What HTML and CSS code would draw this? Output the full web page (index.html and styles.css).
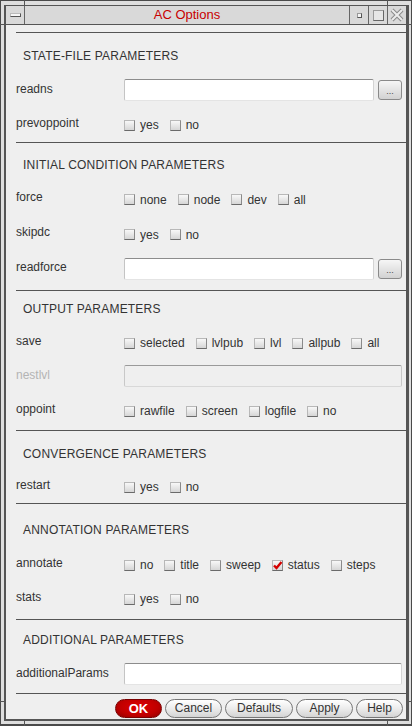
FILE: index.html
```html
<!DOCTYPE html>
<html lang="en">
<head>
<meta charset="utf-8">
<title>AC Options</title>
<link rel="stylesheet" href="styles.css">
</head>
<body>
<div class="window">
  <span class="mark mark-v mark-tl"></span>
  <span class="mark mark-v mark-tr"></span>
  <span class="mark mark-v mark-bl"></span>
  <span class="mark mark-v mark-br"></span>
  <span class="mark mark-h mark-lt"></span>
  <span class="mark mark-h mark-lb"></span>
  <span class="mark mark-h mark-rt"></span>
  <span class="mark mark-h mark-rb"></span>
  <div class="frame">
    <div class="titlebar">
      <div class="tb-btn"><span class="menu-bar"></span></div>
      <div class="tb-title">AC Options</div>
      <div class="tb-btn"><span class="mini-sq"></span></div>
      <div class="tb-btn"><span class="max-sq"></span></div>
      <div class="tb-btn tb-last">
        <svg class="close-x" width="14" height="14" viewBox="0 0 14 14">
          <path d="M2 2 L12 12 M12 2 L2 12" stroke="#8a8a8a" stroke-width="4" fill="none"/>
          <path d="M2 2 L12 12 M12 2 L2 12" stroke="#ececec" stroke-width="2" fill="none"/>
        </svg>
      </div>
    </div>

    <div class="content">
      <div class="sep"></div>
      <div class="section sec-state">
        <div class="head">STATE-FILE PARAMETERS</div>
        <div class="row">
          <div class="label">readns</div>
          <div class="ctrl"><input class="field" type="text"><span class="browse">...</span></div>
        </div>
        <div class="row">
          <div class="label">prevoppoint</div>
          <div class="ctrl opts">
            <span class="opt"><span class="cb"></span>yes</span>
            <span class="opt"><span class="cb"></span>no</span>
          </div>
        </div>
      </div>

      <div class="sep"></div>
      <div class="section sec-init">
        <div class="head">INITIAL CONDITION PARAMETERS</div>
        <div class="row">
          <div class="label">force</div>
          <div class="ctrl opts">
            <span class="opt"><span class="cb"></span>none</span>
            <span class="opt"><span class="cb"></span>node</span>
            <span class="opt"><span class="cb"></span>dev</span>
            <span class="opt"><span class="cb"></span>all</span>
          </div>
        </div>
        <div class="row">
          <div class="label">skipdc</div>
          <div class="ctrl opts">
            <span class="opt"><span class="cb"></span>yes</span>
            <span class="opt"><span class="cb"></span>no</span>
          </div>
        </div>
        <div class="row">
          <div class="label">readforce</div>
          <div class="ctrl"><input class="field" type="text"><span class="browse">...</span></div>
        </div>
      </div>

      <div class="sep"></div>
      <div class="section sec-output">
        <div class="head">OUTPUT PARAMETERS</div>
        <div class="row">
          <div class="label">save</div>
          <div class="ctrl opts">
            <span class="opt"><span class="cb"></span>selected</span>
            <span class="opt"><span class="cb"></span>lvlpub</span>
            <span class="opt"><span class="cb"></span>lvl</span>
            <span class="opt"><span class="cb"></span>allpub</span>
            <span class="opt"><span class="cb"></span>all</span>
          </div>
        </div>
        <div class="row">
          <div class="label label-disabled">nestlvl</div>
          <div class="ctrl"><input class="field field-disabled" type="text" disabled></div>
        </div>
        <div class="row">
          <div class="label">oppoint</div>
          <div class="ctrl opts">
            <span class="opt"><span class="cb"></span>rawfile</span>
            <span class="opt"><span class="cb"></span>screen</span>
            <span class="opt"><span class="cb"></span>logfile</span>
            <span class="opt"><span class="cb"></span>no</span>
          </div>
        </div>
      </div>

      <div class="sep"></div>
      <div class="section sec-conv">
        <div class="head">CONVERGENCE PARAMETERS</div>
        <div class="row">
          <div class="label">restart</div>
          <div class="ctrl opts">
            <span class="opt"><span class="cb"></span>yes</span>
            <span class="opt"><span class="cb"></span>no</span>
          </div>
        </div>
      </div>

      <div class="sep"></div>
      <div class="section sec-annot">
        <div class="head">ANNOTATION PARAMETERS</div>
        <div class="row">
          <div class="label">annotate</div>
          <div class="ctrl opts">
            <span class="opt"><span class="cb"></span>no</span>
            <span class="opt"><span class="cb"></span>title</span>
            <span class="opt"><span class="cb"></span>sweep</span>
            <span class="opt"><span class="cb cb-checked"><svg width="11" height="11" viewBox="0 0 11 11"><path d="M2 5.5 L4.5 8 L9.5 2" stroke="#d40000" stroke-width="2.4" fill="none"/></svg></span>status</span>
            <span class="opt"><span class="cb"></span>steps</span>
          </div>
        </div>
        <div class="row">
          <div class="label">stats</div>
          <div class="ctrl opts">
            <span class="opt"><span class="cb"></span>yes</span>
            <span class="opt"><span class="cb"></span>no</span>
          </div>
        </div>
      </div>

      <div class="sep"></div>
      <div class="section sec-add">
        <div class="head">ADDITIONAL PARAMETERS</div>
        <div class="row">
          <div class="label">additionalParams</div>
          <div class="ctrl"><input class="field" type="text"></div>
        </div>
      </div>

      <div class="sep"></div>
      <div class="buttons">
        <span class="btn btn-ok">OK</span>
        <span class="btn btn-cancel">Cancel</span>
        <span class="btn btn-defaults">Defaults</span>
        <span class="btn btn-apply">Apply</span>
        <span class="btn btn-help">Help</span>
      </div>
    </div>
  </div>
</div>
</body>
</html>
```

FILE: styles.css
```css
html, body {
  margin: 0;
  padding: 0;
  background: #dedede;
}

body {
  font-family: "Liberation Sans", Arial, sans-serif;
  font-size: 12px;
  color: #333;
}

.window {
  position: relative;
  width: 412px;
  height: 726px;
  box-sizing: border-box;
  border: 1px solid #4a4a4a;
  border-bottom-width: 2px;
  background: #dedede;
  padding: 4px 2px 3px 3px;
}

.mark {
  position: absolute;
  background: #555;
}
.mark-v { width: 1px; }
.mark-h { height: 1px; }
.mark-tl { left: 23px; top: -1px; height: 6px; }
.mark-tr { left: 386px; top: -1px; height: 6px; }
.mark-bl { left: 23px; top: 718px; bottom: -2px; }
.mark-br { left: 386px; top: 718px; bottom: -2px; }
.mark-lt { left: -1px; width: 6px; top: 23px; }
.mark-lb { left: -1px; width: 6px; top: 700px; }
.mark-rt { right: -1px; width: 6px; top: 23px; }
.mark-rb { right: -1px; width: 6px; top: 700px; }

.frame {
  height: 100%;
  box-sizing: border-box;
  border-style: solid;
  border-color: #555;
  border-width: 1px 3px 2px 2px;
  background: #efefef;
  display: flex;
  flex-direction: column;
}

/* title bar */
.titlebar {
  height: 19px;
  flex: none;
  box-sizing: border-box;
  border-bottom: 1px solid #555;
  background: #d9d9d9;
  display: flex;
}
.tb-btn {
  width: 18px;
  flex: none;
  border-right: 1px solid #666;
  display: flex;
  align-items: center;
  justify-content: center;
}
.tb-last { border-right: none; }
.tb-title {
  flex: 1;
  border-right: 1px solid #666;
  text-align: center;
  color: #c80000;
  font-size: 13px;
  line-height: 18px;
}
.menu-bar {
  width: 10px;
  height: 3px;
  background: #f6f6f6;
  border-right: 1px solid #555;
  border-bottom: 1px solid #555;
  border-top: 1px solid #bbb;
  border-left: 1px solid #bbb;
  box-sizing: border-box;
  width: 11px;
  height: 4px;
}
.mini-sq {
  width: 5px;
  height: 5px;
  box-sizing: border-box;
  background: #f4f4f4;
  border-top: 1px solid #999;
  border-left: 1px solid #999;
  border-right: 1px solid #555;
  border-bottom: 1px solid #555;
}
.max-sq {
  width: 11px;
  height: 11px;
  box-sizing: border-box;
  background: #e6e6e6;
  border-top: 1px solid #9a9a9a;
  border-left: 1px solid #9a9a9a;
  border-right: 1px solid #666;
  border-bottom: 1px solid #666;
}
.close-x { display: block; }

/* content */
.content {
  flex: 1;
  display: flex;
  flex-direction: column;
  padding-top: 7px;
}

.sep {
  height: 1px;
  flex: none;
  background: #555;
  margin-left: 10px;
}

.section {
  padding: var(--pt) 4px var(--pb) 10px;
}
.sec-state  { --pt: 6px; --pb: 1px; --hh: 34px; --rh: 34px; }
.sec-init   { --pt: 6px; --pb: 4px; --hh: 32px; --rh: 35px; }
.sec-output { --pt: 2px; --pb: 3px; --hh: 32px; --rh: 34px; }
.sec-conv   { --pt: 6px; --pb: 1px; --hh: 33px; --rh: 32px; }
.sec-annot  { --pt: 9px; --pb: 4px; --hh: 34px; --rh: 34px; }
.sec-add    { --pt: 3px; --pb: 2px; --hh: 34px; --rh: 34px; }

.head {
  height: var(--hh);
  display: flex;
  align-items: center;
  padding-left: 7px;
  letter-spacing: 0.2px;
  color: #333;
}

.row {
  height: var(--rh);
  display: flex;
  align-items: center;
}

.label {
  width: 108px;
  flex: none;
  padding-bottom: 3px;
  color: #333;
}
.label-disabled { color: #b4b4b4; }

.ctrl {
  flex: 1;
  display: flex;
  align-items: center;
}

.opts { padding-top: 2px; }

.opt {
  display: flex;
  align-items: center;
  margin-right: 11px;
}

.cb {
  width: 11px;
  height: 11px;
  box-sizing: border-box;
  margin-right: 5px;
  border-top: 1px solid #b8b8b8;
  border-left: 1px solid #b8b8b8;
  border-right: 1px solid #8a8a8a;
  border-bottom: 1px solid #6a6a6a;
  background: linear-gradient(#f8f8f8, #d6d6d6);
  position: relative;
}
.cb-checked svg {
  position: absolute;
  left: -1px;
  top: -1px;
}

.field {
  flex: 1;
  min-width: 0;
  height: 22px;
  box-sizing: border-box;
  margin: 0;
  padding: 0 3px;
  border: 1px solid;
  border-color: #8c8c8c #d4d4d4 #e4e4e4 #c4c4c4;
  border-radius: 2px;
  background: #fff;
  font: inherit;
  outline: none;
}
.field-disabled {
  background: #efefef;
  border-color: #9a9a9a #c8c8c8 #d8d8d8 #c8c8c8;
}

.browse {
  width: 24px;
  height: 20px;
  flex: none;
  box-sizing: border-box;
  margin-left: 4px;
  border: 1px solid #8a8a8a;
  border-radius: 3px;
  background: linear-gradient(#f6f6f6, #d2d2d2);
  font-size: 9px;
  line-height: 20px;
  text-align: center;
  color: #444;
}

/* bottom buttons */
.buttons {
  flex: 1;
  display: flex;
  justify-content: flex-end;
  align-items: flex-start;
  gap: 3px;
  padding: 5px 3px 0 0;
}
.btn {
  height: 19px;
  box-sizing: border-box;
  border: 1px solid #777;
  border-radius: 10px;
  background: linear-gradient(#ffffff, #ececec 50%, #d4d4d4);
  text-align: center;
  line-height: 17px;
  font-size: 12px;
  color: #333;
}
.btn-ok {
  width: 47px;
  border-color: #7a0000;
  background: radial-gradient(ellipse at 50% 40%, #e00000, #c00000 60%, #8e0000);
  color: #fff;
  font-weight: bold;
  font-size: 13px;
}
.btn-cancel { width: 57px; }
.btn-defaults { width: 68px; }
.btn-apply { width: 57px; }
.btn-help { width: 47px; }
```
